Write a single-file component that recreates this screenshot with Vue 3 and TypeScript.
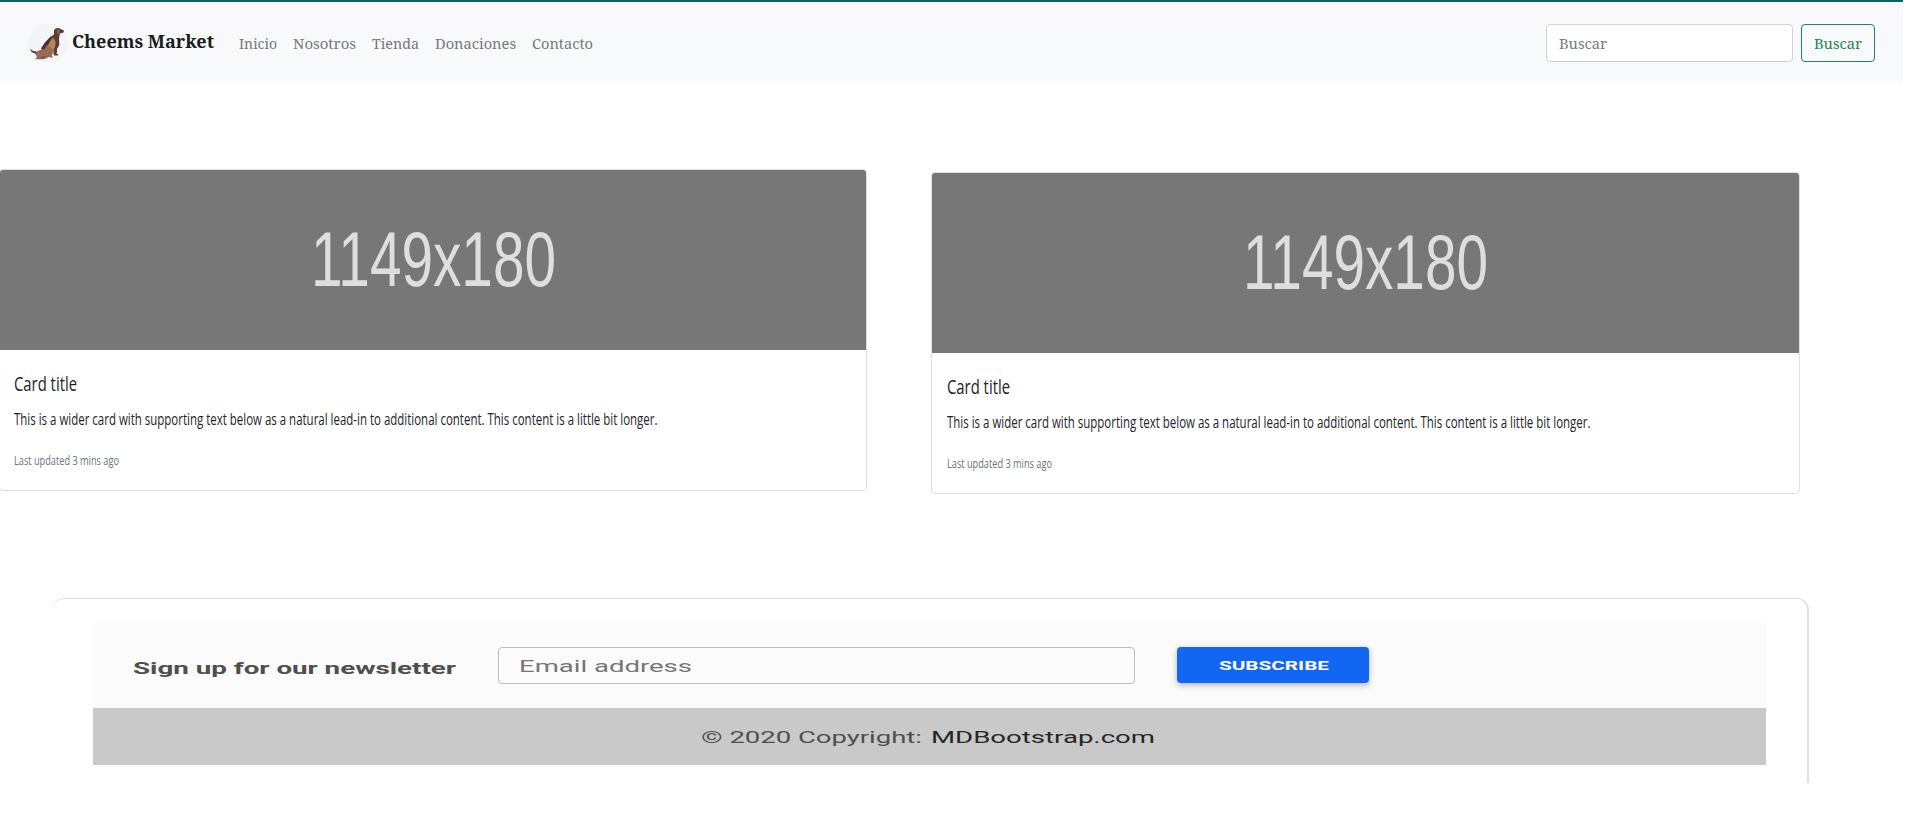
<script setup lang="ts">
import { h } from 'vue'

interface LabelProps {
  text: string
  w: number
  size: number
}

// Text set to an exact width; the box is 1.5em tall with its baseline at 1.1em.
const Label = (props: LabelProps) =>
  h('svg', { width: props.w, height: props.size * 1.5, class: 'label' }, [
    h('text', {
      x: 0,
      y: props.size * 1.1,
      'font-size': props.size,
      textLength: props.w,
      lengthAdjust: 'spacingAndGlyphs',
      fill: 'currentColor',
    }, props.text),
  ])
Label.props = ['text', 'w', 'size']

const links = [
  { text: 'Inicio', w: 38 },
  { text: 'Nosotros', w: 63 },
  { text: 'Tienda', w: 47 },
  { text: 'Donaciones', w: 81 },
  { text: 'Contacto', w: 61 },
]

const cards = [
  { id: 'first', title: 'Card title' },
  { id: 'second', title: 'Card title' },
]
</script>

<template>
  <div class="page">
    <header class="navbar">
      <a class="brand">
        <svg class="logo" width="40" height="40" viewBox="0 0 40 40">
          <circle cx="20" cy="20" r="20" fill="#f3f5f7" />
          <path d="M26 7.5C27 5.3 29.6 4.6 31.4 5.5L36 7.6L35.6 9.6L32 10.5L31 15L31.3 22L29 26L28.8 31L30.4 31.6L30 32.6H26L25 27L20 31L13 26L17 20L22 14L26 11.5Z" fill="#5c3c34" />
          <path d="M13 25.6L17 19.5L22.5 14L21 20L15 26Z" fill="#46302b" />
          <path d="M29 6.5L32 7.2L31.4 10.6L29 10.8Z" fill="#8b5f4b" />
          <path d="M25 14.5L27.6 19L27 24L25.6 27L26 31L23 31L19 25L21 20Z" fill="#bb8558" />
          <path d="M6 28.2L9 28.6L12 27L17 26.2L18.8 22L21.6 24L25 26L24 31L24.5 35L21 34L16 36.2H7L9 34L7.5 31.2Z" fill="#9a6b56" />
          <path d="M2 25.4C4 28 6 28.3 8.5 28.8L7.5 30.6C4.5 30 2.8 28.4 2 25.4Z" fill="#49302e" />
          <path d="M15 33L20 33.6L15 35.4L10 35.6Z" fill="#7d5645" />
        </svg>
        <Label text="Cheems Market" :w="142" :size="18" />
      </a>
      <nav class="links">
        <a v-for="link in links" :key="link.text">
          <Label :text="link.text" :w="link.w" :size="14" />
        </a>
      </nav>
      <form class="search" @submit.prevent>
        <div class="field"><Label text="Buscar" :w="48" :size="14" /></div>
        <button class="go" type="submit"><Label text="Buscar" :w="48" :size="14" /></button>
      </form>
    </header>

    <main class="cards">
      <article v-for="card in cards" :key="card.id" class="card" :class="card.id">
        <div class="cover"><Label text="1149x180" :w="245" :size="78.5" /></div>
        <div class="body">
          <Label class="title" :text="card.title" :w="63" :size="19.5" />
          <Label
            class="copy"
            text="This is a wider card with supporting text below as a natural lead-in to additional content. This content is a little bit longer."
            :w="643.5"
            :size="15.5"
          />
          <Label class="updated" text="Last updated 3 mins ago" :w="105" :size="13.3" />
        </div>
      </article>
    </main>

    <footer class="footer">
      <div class="newsletter">
        <Label class="lead" text="Sign up for our newsletter" :w="323" :size="16" />
        <div class="email"><Label text="Email address" :w="173" :size="16" /></div>
        <button class="subscribe"><Label text="SUBSCRIBE" :w="110" :size="13" /></button>
      </div>
      <div class="copyright">
        <Label text="© 2020 Copyright:" :w="221" :size="16" />
        <a><Label text="MDBootstrap.com" :w="224" :size="16" /></a>
      </div>
    </footer>
  </div>
</template>

<style>
body {
  background: #fff;
}
</style>

<style scoped>
* {
  box-sizing: border-box;
}
.page {
  width: 1928px;
  height: 820px;
}
.label {
  display: block;
  flex: none;
  overflow: visible;
}
.navbar {
  display: flex;
  align-items: flex-start;
  width: 1903px;
  height: 83px;
  padding: 21px 28px 0;
  background: #f8f9fb;
  border-top: 2px solid #07606c;
  font-family: "Noto Serif", "DejaVu Serif", serif;
}
.brand {
  display: flex;
  gap: 4px;
  color: #1b1d1f;
  font-weight: 700;
}
.brand .label {
  margin-top: 5px;
}
.links {
  display: flex;
  gap: 16px;
  margin: 10.5px 0 0 25px;
  color: #777879;
}
.search {
  display: flex;
  gap: 8px;
  margin: 1px 0 0 auto;
}
.field,
.go {
  height: 38px;
  padding: 8.5px 12px;
  border: 1px solid #ced4da;
  border-radius: 4px;
  background: #fff;
  color: #747b82;
  font-family: inherit;
}
.field {
  width: 247px;
}
.go {
  width: 74px;
  border-color: #278158;
  background: transparent;
  color: #278158;
}
.cards {
  display: flex;
  gap: 64px;
  height: 429px;
  margin-left: -1px;
  padding-top: 86px;
}
.card {
  width: 868px;
  height: 322px;
  border: 1px solid #dfdfdf;
  border-radius: 4px;
  background: #fff;
  font-family: "Open Sans", "Noto Sans", sans-serif;
}
.card.second {
  width: 869px;
  margin-top: 3px;
}
.cover {
  display: flex;
  justify-content: center;
  height: 180px;
  padding-top: 29.5px;
  border-radius: 3px 3px 0 0;
  background: #777;
  color: #dedede;
  font-family: "Liberation Sans", Arial, sans-serif;
  -webkit-text-stroke: 1px #dedede;
}
.body {
  padding: 19.5px 14px 0 15px;
  color: #212529;
}
.first .body {
  padding-left: 14px;
}
.title {
  font-weight: 500;
}
.copy {
  margin-top: 9px;
}
.updated {
  margin-top: 19px;
  color: #6c757d;
}
.footer {
  width: 1757px;
  height: 185px;
  margin: 86px 0 0 52px;
  padding: 24px 41px 0;
  border-top: 1px solid #dfdfdf;
  border-right: 2px solid #dfdfdf;
  border-radius: 12px 12px 0 0;
  font-family: Roboto, sans-serif;
}
.newsletter {
  display: flex;
  height: 85px;
  padding: 24px 0 0 40px;
  background: #fbfbfb;
}
.lead {
  margin-top: 8.5px;
  color: #4f4f4f;
  font-weight: 700;
}
.email {
  width: 637px;
  height: 37px;
  margin-left: 42px;
  padding: 6px 20px;
  border: 1px solid #bdbdbd;
  border-radius: 4px;
  color: #757575;
}
.subscribe {
  display: flex;
  width: 192px;
  height: 36px;
  margin-left: 42px;
  padding: 9px 0 0 42px;
  border: 0;
  border-radius: 4px;
  background: #1266f1;
  box-shadow: 0 2px 6px rgba(0, 0, 0, 0.3);
  color: #fff;
  font-family: inherit;
  font-weight: 700;
}
.copyright {
  display: flex;
  gap: 9px;
  height: 57px;
  padding: 16.5px 0 0 608px;
  background: #c9c9c9;
  color: #4f4f4f;
}
.copyright a {
  color: #262626;
}
</style>
